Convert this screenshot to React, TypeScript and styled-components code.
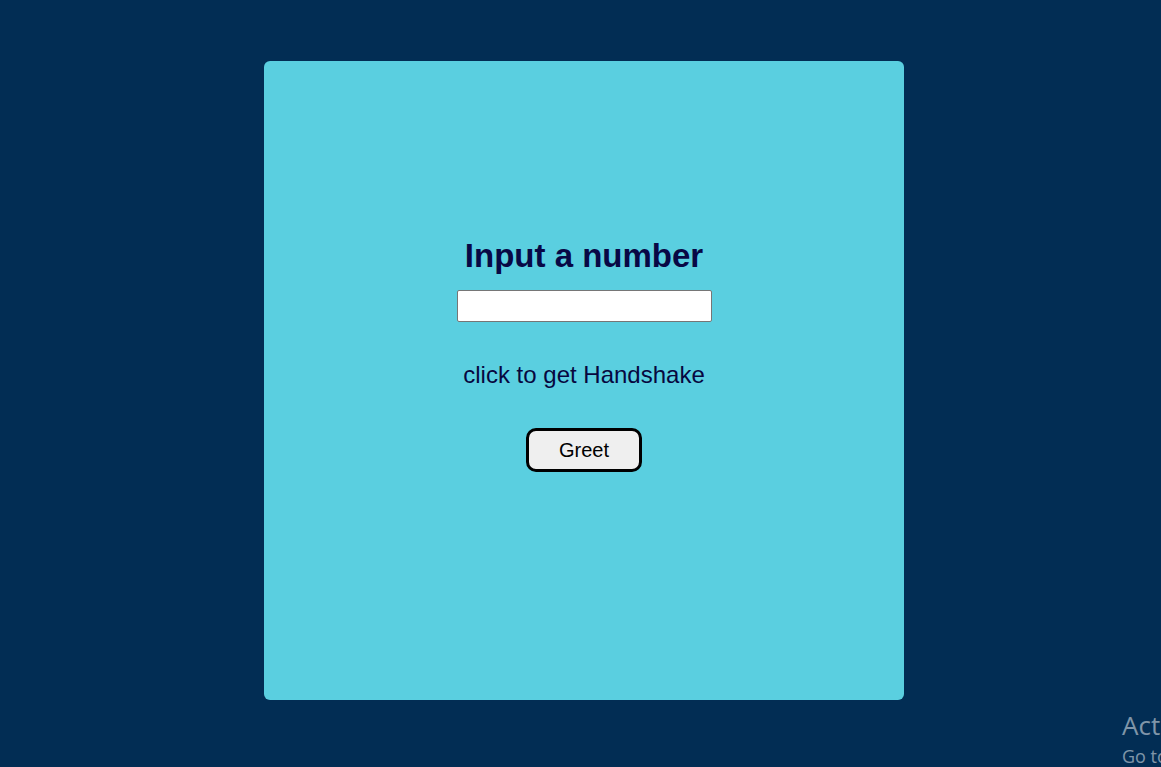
import React from "react";
import styled, { createGlobalStyle } from "styled-components";

const Global = createGlobalStyle`
  html, body { margin: 0; padding: 0; height: 100%; overflow: hidden; }
  body { background: #022d54; font-family: "Liberation Sans", Arial, sans-serif; }
`;

const Page = styled.div`
  position: relative;
  width: 1161px;
  height: 767px;
  padding: 61px 0 0 264px;
  box-sizing: border-box;
`;

const Card = styled.div`
  width: 640px;
  height: 639px;
  background: #5acfe0;
  border-radius: 6px;
  display: flex;
  flex-direction: column;
  align-items: center;
  padding-top: 176px;
  box-sizing: border-box;
`;

const Heading = styled.h1`
  margin: 0;
  font-size: 33px;
  line-height: 38px;
  font-weight: 700;
  color: #080845;
`;

const NumberInput = styled.input`
  margin-top: 15px;
  width: 255px;
  height: 32px;
  box-sizing: border-box;
  border: 1px solid #767676;
  border-radius: 2px;
  background: #fff;
  padding: 1px 2px;
`;

const Hint = styled.p`
  margin: 40px 0 0;
  font-size: 24px;
  line-height: 26px;
  color: #07073f;
`;

const Button = styled.button`
  margin-top: 40px;
  width: 116px;
  height: 44px;
  box-sizing: border-box;
  border: 3px solid #000;
  border-radius: 10px;
  background: #efefef;
  font-family: "Liberation Sans", Arial, sans-serif;
  font-size: 20px;
  color: #000;
  cursor: pointer;
`;

const Watermark = styled.div`
  position: absolute;
  left: 1122px;
  top: 706px;
  color: rgba(255, 255, 255, 0.5);
  font-family: "Open Sans", "Noto Sans", sans-serif;
  white-space: nowrap;
`;

const WatermarkTitle = styled.div`
  font-size: 26px;
  line-height: 38px;
`;

const WatermarkSub = styled.div`
  font-size: 18px;
  line-height: 24px;
`;

export default function App() {
  return (
    <>
      <Global />
      <Page>
        <Card>
          <Heading>Input a number</Heading>
          <NumberInput type="number" />
          <Hint>click to get Handshake</Hint>
          <Button>Greet</Button>
        </Card>
        <Watermark>
          <WatermarkTitle>Activate Windows</WatermarkTitle>
          <WatermarkSub>Go to Settings to activate Windows.</WatermarkSub>
        </Watermark>
      </Page>
    </>
  );
}
